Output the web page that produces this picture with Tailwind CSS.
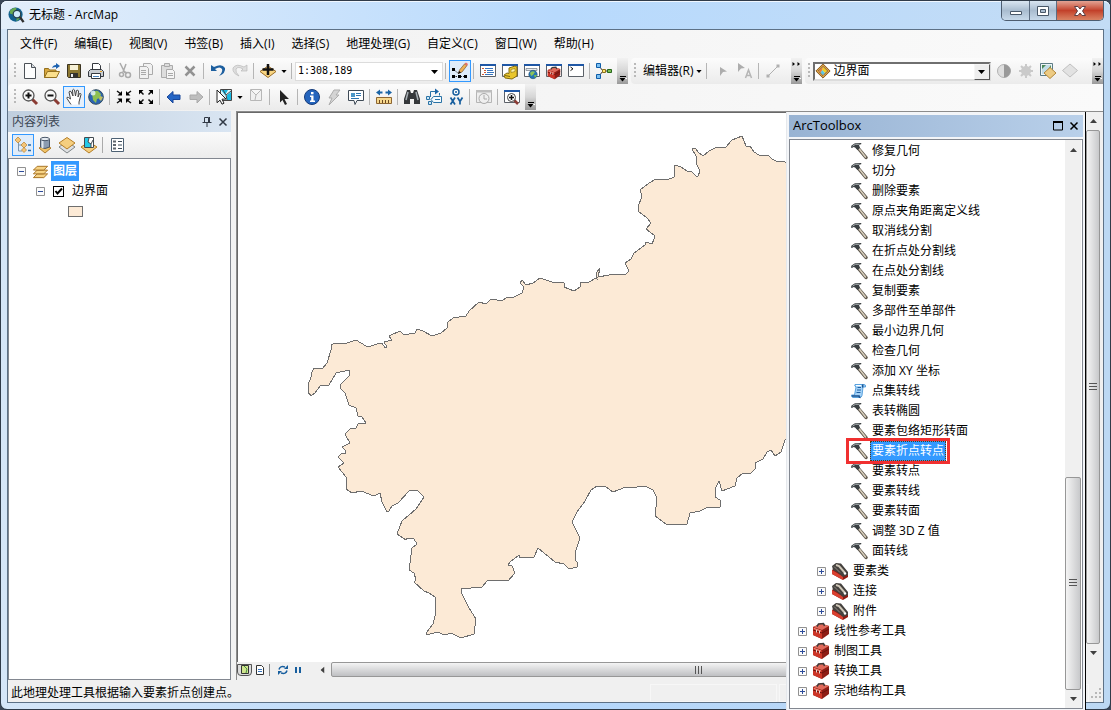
<!DOCTYPE html>
<html lang="zh-CN">
<head>
    <meta charset="UTF-8">
    <meta name="viewport" content="width=device-width, initial-scale=1.0">
    <title>无标题 - ArcMap</title>
    <script src="https://cdn.jsdelivr.net/npm/@tailwindcss/browser@4"></script>
</head>
<body class="h-screen overflow-hidden bg-[#3b4757] font-['Open_Sans','Noto_Sans_CJK_SC',sans-serif] text-xs text-black">

    <!-- Icon definitions -->
    <svg class="hidden" aria-hidden="true">
        <symbol id="hammer" viewBox="0 0 18 18">
            <path d="M8 6l8 9.500" stroke="#5d564c" stroke-width="3.400" stroke-linecap="round"/>
            <path d="M8.500 6l7 9" stroke="#d6cdbb" stroke-width="1.600" stroke-linecap="round"/>
            <path d="M1 5.500L1.500 3.500 5 1.200 11 1l.5 1L9 3l1 3-2.500 2-2.500-2.500-1.500-.5L2 6z" fill="#3a3f42"/>
            <path d="M2.500 4.200L5.500 2.300h4" stroke="#a9afb1" fill="none"/>
        </symbol>
        <symbol id="script" viewBox="0 0 18 18">
            <path d="M5 2.500h9q2 0 1.500 2.500h-2.500l-1 8.500q-.5 2-2.500 2H3q-2-.5-1.500-2.500h3L6 5q-2-1-1-2.500z" fill="#a5d3f8"/>
            <path d="M5 2.500h9q2 0 1.500 2.500h-2.500l-1 8.500q-.5 2-2.500 2H3q-2-.5-1.500-2.500h3L6 5q-2-1-1-2.500z" fill="none" stroke="#3b8fd6" stroke-width=".8"/>
            <path d="M7.500 5.500h3.500M7 8h4M6.500 10.500h4" stroke="#1c5fa3"/>
            <path d="M2 14h7q0 1.500 1.500 1.500M13 5.500q-1-1 0-3" stroke="#174f8c" stroke-width="1.500" fill="none"/>
            <path d="M6 3.500h5" stroke="#fff"/>
        </symbol>
        <symbol id="toolset" viewBox="0 0 18 18">
            <path d="M1 8l3-2 13 7v2l-5 3L1 12z" fill="#8c1a12"/>
            <path d="M1 8l11 6.500V18L1 12z" fill="#d8402f"/>
            <path d="M1 4l4-3 5 .5 7 8.500v3l-5 2-6-5-4-2z" fill="#45413e"/>
            <path d="M5 3l3 1 6 7" stroke="#cfc7b8" stroke-width="2" fill="none"/>
            <path d="M3 4.500l6 6" stroke="#8f8982"/>
            <circle cx="14" cy="11.500" r="1.200" fill="#fff"/>
        </symbol>
        <symbol id="toolbox" viewBox="0 0 18 18">
            <path d="M1 5l8-3.500L17 4v8l-7 5-9-4z" fill="#8e1e16"/>
            <path d="M1 5l8-3.500L17 4l-7 4z" fill="#e06a5b"/>
            <path d="M1 5.500l9 3V17l-9-4z" fill="#cc3527"/>
            <path d="M1 8l9 3 7-4" stroke="#6d120d" fill="none"/>
            <path d="M5 4.500l1.500-2.500 5-.5 1 2.500" stroke="#3e3a39" stroke-width="1.500" fill="none"/>
            <path d="M4.500 8v2.500M7.500 9v2.500" stroke="#e8dcd7"/>
            <path d="M2 6.500l7 2.500" stroke="#ef9b8d"/>
        </symbol>
        <symbol id="plus" viewBox="0 0 9 9">
            <path d="M.5.5h8v8h-8z" fill="#fbfbfb" stroke="#919191"/>
            <path d="M2 4.500h5M4.500 2v5" stroke="#2c4b9a"/>
        </symbol>
        <symbol id="minus" viewBox="0 0 9 9">
            <path d="M.5.5h8v8h-8z" fill="#fbfbfb" stroke="#919191"/>
            <path d="M2 4.500h5" stroke="#2c4b9a"/>
        </symbol>
        <symbol id="down" viewBox="0 0 7 4"><path d="M0 0h7L3.500 4z"/></symbol>
        <symbol id="scroll" viewBox="0 0 7 4"><path d="M0 0h7L3.500 4z" fill="#404040"/></symbol>
        <symbol id="magnify" viewBox="0 0 18 18">
            <path d="M11 11l5 5" stroke="#8b3b33" stroke-width="3"/>
            <circle cx="7.500" cy="7.500" r="5.500" fill="#f8f8f8" stroke="#555" stroke-width="1.300"/>
        </symbol>
        <symbol id="layer-diamond" viewBox="0 0 18 18">
            <path d="M9 1l8 8-8 8-8-8z" fill="#dda044" stroke="#7a4d15"/>
            <path d="M9 4l5 5-5 5-5-5z" fill="#fff2b8" stroke="#5b3d1a"/>
            <path d="M9 4.500L13.500 9 11 11 8 8z" fill="#f4d21f"/><path d="M4.500 9L9 4.500 8 8l-1 3z" fill="#ed7d3c"/><path d="M9 13.500L6.500 11 8 8l3 3z" fill="#5bc6e8"/>
        </symbol>
        <symbol id="overflow" viewBox="0 0 11 26">
            <path d="M3 18.500h6" stroke="#000"/><path d="M4 20.500h6" stroke="#fff"/><path d="M2.500 20h6L5.500 23.500z"/>
        </symbol>
        <symbol id="overflow-more" viewBox="0 0 11 26">
            <path d="M1.500 4l2.500 2-2.500 2zM6.500 4L9 6 6.500 8z"/>
            <path d="M3 18.500h6" stroke="#000"/><path d="M4 20.500h6" stroke="#fff"/><path d="M2.500 20h6L5.500 23.500z"/>
        </symbol>
        <symbol id="grip" viewBox="0 0 4 18">
            <path d="M1 1h2v2H1zM1 5h2v2H1zM1 9h2v2H1zM1 13h2v2H1z" fill="#b9b9b9"/>
        </symbol>
        <symbol id="window" viewBox="0 0 18 18">
            <path d="M1.500 2.500h15v12h-15z" fill="#fff" stroke="#5c6168"/>
            <path d="M1 2h16v2H1z" fill="#1f57a5"/>
        </symbol>
    </svg>

    <div class="flex h-full flex-col rounded-[7px] border border-[#303b49] bg-gradient-to-r from-[#d5e6f8] via-[#b5d7fb] to-[#bcd8f3]">

        <!-- Title bar -->
        <header class="flex h-[28px] shrink-0 items-start justify-between rounded-t-md bg-gradient-to-r from-[#e3eefa] via-[#b8dafd] to-[#c3dcf5] pr-[6px] pl-[7px] shadow-[inset_0_1px_0_#f0f7ff]">
            <h1 class="flex h-[28px] items-center gap-1">
                <svg class="size-[17px]" viewBox="0 0 18 18">
                    <circle cx="8" cy="8" r="7.500" fill="#12618f"/>
                    <path d="M2 4q3-4 7-3l-1 4-3 3-3-1zM9 9l5-1-1 4-4 3z" fill="#68a950"/>
                    <circle cx="9.500" cy="7.500" r="4" fill="#cfeafa" stroke="#27424f" stroke-width="1.300"/>
                    <path d="M12.500 10.500l4 5.500" stroke="#303030" stroke-width="2.500"/>
                </svg>
                <span>无标题 - ArcMap</span>
            </h1>
            <div class="flex h-5 overflow-hidden rounded-b-[5px] border border-t-0 border-[#4d5d70]">
                <button aria-label="最小化" class="grid w-[28px] place-items-center border-r border-[#5c6d82] bg-gradient-to-b from-[#d9e5f1] via-[#a9bccf] to-[#c7d9ea]">
                    <svg class="h-[14px] w-[14px]" viewBox="0 0 14 14"><path d="M1.500 7.500h11v3h-11z" fill="#fff" stroke="#485768"/></svg>
                </button>
                <button aria-label="最大化" class="grid w-[27px] place-items-center border-r border-[#5c6d82] bg-gradient-to-b from-[#d9e5f1] via-[#a9bccf] to-[#c7d9ea]">
                    <svg class="h-[14px] w-[14px]" viewBox="0 0 14 14"><path d="M1.500 2.500h11v9h-11z" fill="#fff" stroke="#485768"/><path d="M4.500 5.500h5v3h-5z" fill="#a9bccf" stroke="#485768"/></svg>
                </button>
                <button aria-label="关闭" class="grid w-[46px] place-items-center bg-gradient-to-b from-[#e2a394] via-[#c2402a] to-[#d98263]">
                    <svg class="h-[14px] w-[14px]" viewBox="0 0 14 14"><path d="M1.500 2.500h3.500l2 2.500 2-2.500h3.500L9.500 7l3 4.500H9L7 9l-2 2.500H1.500l3-4.500z" fill="#fff" stroke="#5d4045"/></svg>
                </button>
            </div>
        </header>

        <main class="mx-[6px] mb-[6px] flex min-h-0 flex-1 flex-col border border-[#5d7186] bg-gradient-to-r from-[#f0f0f0] to-[#fafafa]">

            <!-- Menu bar -->
            <nav class="flex h-[28px] shrink-0 items-center gap-[17px] pl-3 whitespace-nowrap">
                <button>文件(F)</button>
                <button>编辑(E)</button>
                <button>视图(V)</button>
                <button>书签(B)</button>
                <button>插入(I)</button>
                <button>选择(S)</button>
                <button>地理处理(G)</button>
                <button>自定义(C)</button>
                <button>窗口(W)</button>
                <button>帮助(H)</button>
            </nav>

            <!-- Toolbar row 1 -->
            <div class="flex h-[26px] shrink-0 items-center">
                <div class="flex h-[26px] shrink-0 items-center rounded-l bg-gradient-to-b from-[#fcfcfc] to-[#ebebeb] pl-[5px]">
                    <svg class="mr-0.5 h-[18px] w-1"><use href="#grip"/></svg>
                    <button aria-label="新建" class="grid h-[22px] w-[22px] place-items-center">
                        <svg class="size-[18px]" viewBox="0 0 18 18"><path d="M3.500 1.500h7l4 4v11h-11z" fill="#fdfdfd" stroke="#4c5157"/><path d="M10.500 1.500v4h4" fill="#d7dce2" stroke="#4c5157"/></svg>
                    </button>
                    <button aria-label="打开" class="grid h-[22px] w-[22px] place-items-center">
                        <svg class="size-[18px]" viewBox="0 0 18 18"><path d="M1.500 15.500v-9h4l1 1.500h6.500v7.500z" fill="#d9a83e" stroke="#94701f"/><path d="M1.500 15.500l3-6h12l-3 6z" fill="#fbdf8c" stroke="#94701f"/><path d="M9 6q1-3 4-3V1l4 3-4 3V5q-2 0-4 1z" fill="#1d62b0"/></svg>
                    </button>
                    <button aria-label="保存" class="grid h-[22px] w-[22px] place-items-center">
                        <svg class="size-[18px]" viewBox="0 0 18 18"><path d="M2.500 2.500h13v13h-12l-1-1z" fill="#8c7731" stroke="#3a3320"/><path d="M5 3h8v5H5z" fill="#f6f1d7"/><path d="M5 11h8v5H5z" fill="#34322e"/><path d="M6 12h2v3H6z" fill="#eee"/></svg>
                    </button>
                    <button aria-label="打印" class="grid h-[22px] w-[22px] place-items-center">
                        <svg class="size-[18px]" viewBox="0 0 18 18"><path d="M5.500 8V1.500h6l2 2V8" fill="#fff" stroke="#34383e"/><path d="M3.500 7.500h11l2 2v5h-15v-5z" fill="#c9cdd2" stroke="#34383e"/><path d="M4.500 11.500h9v5h-9z" fill="#fff" stroke="#34383e"/><path d="M6 14.500h6" stroke="#4a82bd"/><path d="M13 9.500h2" stroke="#e0a020"/></svg>
                    </button>
                    <i class="mx-[2px] h-4 w-0.5 border-l border-[#b5b5b5]"></i>
                    <button aria-label="剪切" class="grid h-[22px] w-[22px] place-items-center">
                        <svg class="size-[18px]" viewBox="0 0 18 18" fill="none" stroke="#ababab" stroke-width="1.500"><path d="M5 1l5 10M11 2L8 10"/><circle cx="6.500" cy="12.500" r="2"/><circle cx="13" cy="13" r="2.500"/><path d="M8 9l4 2"/></svg>
                    </button>
                    <button aria-label="复制" class="grid h-[22px] w-[22px] place-items-center">
                        <svg class="size-[18px]" viewBox="0 0 18 18" fill="#f1f1f1" stroke="#aaa"><path d="M6.500 1.500h7l2 2v9h-9z"/><path d="M2.500 4.500h7l2 2v10h-9z"/><path d="M4 8.500h5M4 10.500h5M4 12.500h5"/></svg>
                    </button>
                    <button aria-label="粘贴" class="grid h-[22px] w-[22px] place-items-center">
                        <svg class="size-[18px]" viewBox="0 0 18 18" fill="#ddd" stroke="#aaa"><path d="M2.500 3.500h11v12h-11z"/><path d="M5.500 1.500h5v3h-5z"/><path d="M7.500 7.500h6l2 2v7h-8z" fill="#f5f5f5"/><path d="M9 11.500h5M9 13.500h5"/></svg>
                    </button>
                    <button aria-label="删除" class="grid h-[22px] w-[22px] place-items-center">
                        <svg class="size-[18px]" viewBox="0 0 18 18"><path d="M4.500 4.500l9 9M13.500 4.500l-9 9" stroke="#929292" stroke-width="2.500"/></svg>
                    </button>
                    <i class="mx-[2px] h-4 w-0.5 border-l border-[#b5b5b5]"></i>
                    <button aria-label="撤销" class="grid h-[22px] w-[22px] place-items-center">
                        <svg class="size-[18px]" viewBox="0 0 18 18"><path d="M2 3v6h6L6 7q5-3 7 0 1 3-3 7 7-3 6-8-3-5-11-1z" fill="#1d5f9f"/></svg>
                    </button>
                    <button aria-label="恢复" class="grid h-[22px] w-[22px] place-items-center">
                        <svg class="size-[18px]" viewBox="0 0 18 18"><path d="M16 3v6h-6l2-2q-5-3-7 0-1 3 3 7-7-3-6-8 3-5 11-1z" fill="#dedede" stroke="#b9b9b9" stroke-width=".7"/></svg>
                    </button>
                    <i class="mx-[2px] h-4 w-0.5 border-l border-[#b5b5b5]"></i>
                    <button aria-label="添加数据" class="flex h-[22px] w-8 items-center justify-center gap-1">
                        <svg class="size-[18px]" viewBox="0 0 18 18"><path d="M1 9.500L9 4l8 5.500-8 6z" fill="#f8d582" stroke="#9b6d25"/><path d="M9 2v11M3.500 7.500h11" stroke="#111" stroke-width="2.500"/></svg>
                        <svg class="h-[3px] w-[6px]"><use href="#down"/></svg>
                    </button>
                    <i class="mx-[2px] h-4 w-0.5 border-l border-[#b5b5b5]"></i>
                    <div class="relative h-[19px] w-[148px]">
                        <select aria-label="地图比例尺" class="h-full w-full appearance-none border border-[#dcdcdc] bg-white pl-0.5 font-['DejaVu_Sans_Mono',monospace] text-[10px]">
                            <option>1:308,189</option>
                        </select>
                        <svg class="pointer-events-none absolute top-[8px] right-[5px] h-1 w-[7px]"><use href="#down"/></svg>
                    </div>
                    <i class="mx-[2px] h-4 w-0.5 border-l border-[#b5b5b5]"></i>
                    <button aria-label="编辑器工具条" class="grid h-[22px] w-[22px] place-items-center border border-[#3399ff] bg-[#dfecfa]">
                        <svg class="size-[18px]" viewBox="0 0 18 18"><path d="M2.500 7.500l5 4M2 14.500h13" stroke="#333" fill="none" stroke-dasharray="1.500 1"/><path d="M1 6h3v3H1zM1 13h3v3H1zM7 13h3v3H7zM13 13h3v3h-3z"/><path d="M7.500 11.500l1-3.500 5-6 2.500 1.500-5 6.500z" fill="#eeb155" stroke="#7c5a37" stroke-width=".7"/><path d="M13.500 1.500L15 .5l2 1.500-1 2z" fill="#e76f67"/><path d="M7 12l1-3 2 1.500z"/></svg>
                    </button>
                    <i class="mx-[2px] h-4 w-0.5 border-l border-[#b5b5b5]"></i>
                    <button aria-label="内容列表" class="grid h-[22px] w-[22px] place-items-center">
                        <svg class="size-[18px]" viewBox="0 0 18 18"><use href="#window"/><path d="M3 6.500h2M5 8.500h2M5 10.500h2M3 12.500h2" stroke="#d05b35"/><path d="M6 6.500h8M8 8.500h6M8 10.500h7M6 12.500h8" stroke="#3975bd"/></svg>
                    </button>
                    <button aria-label="目录" class="grid h-[22px] w-[22px] place-items-center">
                        <svg class="size-[18px]" viewBox="0 0 18 18"><use href="#window"/><path d="M8 6l6-2 2 1v9l-5 3-7-1-1-3 3-2 2 .500z" fill="#e9c62c" stroke="#856d12"/><path d="M10 7.500l4-1v3l-4 1z" fill="#fff4a8" stroke="#856d12" stroke-width=".6"/><path d="M4 13.500l5 1" stroke="#7c6512"/></svg>
                    </button>
                    <button aria-label="搜索" class="grid h-[22px] w-[22px] place-items-center">
                        <svg class="size-[18px]" viewBox="0 0 18 18"><use href="#window"/><path d="M3 6.500h11v2H3z" fill="#e8ecef" stroke="#7c8791" stroke-width=".8"/><circle cx="10" cy="12.500" r="4.200" fill="#2475b6" stroke="#265072" stroke-width=".6"/><path d="M7 11q2-3 5-1l-2 3-2 1z" fill="#8cc35a"/><path d="M11 13l3 0-2 3z" fill="#7cbf4d"/></svg>
                    </button>
                    <button aria-label="ArcToolbox" class="grid h-[22px] w-[22px] place-items-center">
                        <svg class="size-[18px]" viewBox="0 0 18 18"><use href="#window"/><use href="#toolbox" x="2" y="4" width="14" height="14"/></svg>
                    </button>
                    <button aria-label="Python" class="grid h-[22px] w-[22px] place-items-center">
                        <svg class="size-[18px]" viewBox="0 0 18 18"><use href="#window"/><path d="M3.500 5l2.500 1.800-2.500 1.800" stroke="#111" fill="none"/></svg>
                    </button>
                    <i class="mx-[2px] h-4 w-0.5 border-l border-[#b5b5b5]"></i>
                    <button aria-label="模型构建器" class="grid h-[22px] w-[22px] place-items-center">
                        <svg class="size-[18px]" viewBox="0 0 18 18"><path d="M4 4l4 5-4 5M9 9h5" stroke="#333" fill="none"/><path d="M1.500 1.500h4v4h-4zM1.500 12.500h4v4h-4z" fill="#7cc0f2" stroke="#0f5da8"/><path d="M7.500 7.500h3v3h-3z" fill="#ffe574" stroke="#8b711b"/><path d="M12.500 7.500h4v3h-4z" fill="#7ebf53" stroke="#28671d"/></svg>
                    </button>
                    <button aria-label="工具条选项" class="ml-0.5 h-[26px] w-[11px] bg-gradient-to-b from-[#f2f2f2] via-[#d6d6d6] to-[#9a9a9a]"><svg class="h-[26px] w-[11px]"><use href="#overflow"/></svg></button>
                </div>
                <div class="ml-[3px] flex h-[26px] shrink-0 items-center rounded-l bg-gradient-to-b from-[#fcfcfc] to-[#ebebeb] pl-0.5">
                    <svg class="mr-[6px] h-[18px] w-1"><use href="#grip"/></svg>
                    <button class="flex items-center gap-0.5 whitespace-nowrap">编辑器(R) <svg class="h-[3px] w-[6px]"><use href="#down"/></svg></button>
                    <i class="mx-1 h-4 w-0.5 border-l border-[#b5b5b5]"></i>
                    <button aria-label="编辑工具" class="grid h-[22px] w-[22px] place-items-center">
                        <svg class="size-[18px]" viewBox="0 0 18 18"><path d="M6 5l7 4.500-4 .5-3 4z" fill="#adadad"/></svg>
                    </button>
                    <button aria-label="编辑注记工具" class="grid h-[22px] w-[22px] place-items-center">
                        <svg class="size-[18px]" viewBox="0 0 18 18"><path d="M2 1l7 5-4 .5L2 10z" fill="#adadad"/><path d="M9.500 16l3-8 3 8M10.500 13.500h4" stroke="#b5b5b5" stroke-width="1.500" fill="none"/></svg>
                    </button>
                    <i class="mx-[2px] h-4 w-0.5 border-l border-[#b5b5b5]"></i>
                    <button aria-label="直线段" class="grid h-[22px] w-[22px] place-items-center">
                        <svg class="size-[18px]" viewBox="0 0 18 18"><path d="M4 14L14 4" stroke="#b0b0b0"/><path d="M2.500 12.500h3v3h-3zM12.500 2.500h3v3h-3z" fill="#b0b0b0"/></svg>
                    </button>
                    <button aria-label="编辑器选项" class="ml-[7px] h-[26px] w-[11px] bg-gradient-to-b from-[#f2f2f2] via-[#d6d6d6] to-[#9a9a9a]"><svg class="h-[26px] w-[11px]"><use href="#overflow-more"/></svg></button>
                </div>
                <div class="ml-[3px] flex h-[26px] flex-1 items-center rounded-l bg-gradient-to-b from-[#fcfcfc] to-[#ebebeb] pl-0.5">
                    <svg class="mr-0.5 h-[18px] w-1 shrink-0"><use href="#grip"/></svg>
                    <div class="relative h-[19px] w-[178px]">
                        <select aria-label="图层" class="h-full w-full appearance-none border-2 border-[#dcdcdc] border-t-[#6f6f6f] border-l-[#6f6f6f] bg-white pl-[19px] text-xs leading-[14px]">
                            <option>边界面</option>
                        </select>
                        <svg class="pointer-events-none absolute top-px left-0.5 size-4"><use href="#layer-diamond"/></svg>
                        <span class="pointer-events-none absolute top-0.5 right-px grid h-[16px] w-[16px] place-items-center border border-[#f5f5f5] border-r-[#555] border-b-[#555] bg-[#eeeeee]"><svg class="h-1 w-[7px]"><use href="#down"/></svg></span>
                    </div>
                    <button aria-label="对比度" class="ml-0.5 grid h-[22px] w-[22px] place-items-center">
                        <svg class="size-[18px]" viewBox="0 0 18 18"><circle cx="9" cy="9" r="6.500" fill="#dedede" stroke="#b2b2b2"/><path d="M9 2.500a6.500 6.500 0 0 1 0 13z" fill="#999"/></svg>
                    </button>
                    <button aria-label="亮度" class="grid h-[22px] w-[22px] place-items-center">
                        <svg class="size-[18px]" viewBox="0 0 18 18"><path d="M9 2v14M2 9h14M4 4l10 10M14 4L4 14" stroke="#c9c9c9" stroke-width="2"/><circle cx="9" cy="9" r="5" fill="#cacaca"/></svg>
                    </button>
                    <button aria-label="透明度" class="grid h-[22px] w-[22px] place-items-center">
                        <svg class="size-[18px]" viewBox="0 0 18 18"><path d="M1.500 1.500h12v12h-12z" fill="#eef4f6" stroke="#5b7b85"/><path d="M3 3h9v9H3z" fill="#4c8a5a"/><path d="M3 7l4-4h5L6 12H3z" fill="#c2dce6"/><path d="M5 11l6-5.500 6 5.500-6 5.500z" fill="#edcb83" stroke="#b3883c"/></svg>
                    </button>
                    <button aria-label="卷帘" class="grid h-[22px] w-[22px] place-items-center">
                        <svg class="size-[18px]" viewBox="0 0 18 18"><path d="M1.500 8.500L9 2l7.500 6.500L9 15z" fill="#e2e2e2" stroke="#c0c0c0"/></svg>
                    </button>
                    <button aria-label="效果选项" class="ml-auto h-[26px] w-[11px] bg-gradient-to-b from-[#f2f2f2] via-[#d6d6d6] to-[#9a9a9a]"><svg class="h-[26px] w-[11px]"><use href="#overflow-more"/></svg></button>
                </div>
            </div>

            <!-- Toolbar row 2 -->
            <div class="mb-px flex h-[26px] shrink-0 items-center">
                <div class="flex h-[26px] items-center rounded-l bg-gradient-to-b from-[#fcfcfc] to-[#ebebeb] pl-[5px]">
                    <svg class="mr-0.5 h-[18px] w-1"><use href="#grip"/></svg>
                    <button aria-label="放大" class="grid h-[22px] w-[22px] place-items-center">
                        <svg class="size-[18px]" viewBox="0 0 18 18"><use href="#magnify"/><path d="M4.500 7.500h6M7.500 4.500v6" stroke="#111" stroke-width="2"/></svg>
                    </button>
                    <button aria-label="缩小" class="grid h-[22px] w-[22px] place-items-center">
                        <svg class="size-[18px]" viewBox="0 0 18 18"><use href="#magnify"/><path d="M4.500 7.500h6" stroke="#111" stroke-width="2"/></svg>
                    </button>
                    <button aria-label="平移" class="grid h-[22px] w-[22px] place-items-center border border-[#3399ff] bg-[#e6f0fb]">
                        <svg class="size-[18px]" viewBox="0 0 18 18"><path d="M6 16.500L2 10.500q-.5-2 1.500-1L5.500 11 4 4q.5-1.500 2-.5L8 8 7.500 2q1-1.500 2 0l1 6 1-5.500q1.500-1 2 .5L13 9l1.500-3.500q1.500-.5 1.500 1L14 14v2.500" fill="#fff" stroke="#444"/></svg>
                    </button>
                    <button aria-label="全图" class="grid h-[22px] w-[22px] place-items-center">
                        <svg class="size-[18px]" viewBox="0 0 18 18"><circle cx="9" cy="9" r="7.300" fill="#2b63b4" stroke="#344f60"/><path d="M5 5q3-3 6-2l3 3-1 4-3 1-1 4-3-3z" fill="#8dbf52"/><path d="M13 8l3 1-2 4-2-2z" fill="#c2bf62"/><circle cx="6" cy="5" r="2.500" fill="#e3f2f6" fill-opacity=".85"/></svg>
                    </button>
                    <i class="mx-[2px] h-4 w-0.5 border-l border-[#b5b5b5]"></i>
                    <button aria-label="固定比例放大" class="grid h-[22px] w-[22px] place-items-center">
                        <svg class="size-[18px]" viewBox="0 0 18 18"><path d="M2 3l4 3M16 3l-4 3M2 15l4-3M16 15l-4-3" stroke="#111" stroke-width="1.500"/><path d="M7 3v4.500H2.500zM11 3v4.500h4.500zM7 15v-4.500H2.500zM11 15v-4.500h4.500z"/></svg>
                    </button>
                    <button aria-label="固定比例缩小" class="grid h-[22px] w-[22px] place-items-center">
                        <svg class="size-[18px]" viewBox="0 0 18 18"><path d="M3 3l3.500 3.500M15 3l-3.500 3.500M3 15l3.500-3.500M15 15l-3.500-3.500" stroke="#111" stroke-width="1.500"/><path d="M2 2h4.500L2 6.500zM16 2h-4.500L16 6.500zM2 16h4.500L2 11.500zM16 16h-4.500l4.500-4.500z"/></svg>
                    </button>
                    <i class="mx-[2px] h-4 w-0.5 border-l border-[#b5b5b5]"></i>
                    <button aria-label="返回上一视图" class="grid h-[22px] w-[22px] place-items-center">
                        <svg class="size-[18px]" viewBox="0 0 18 18"><path d="M2 9l6-5.500V7h7v4.500H8v3.500z" fill="#2465c5" stroke="#19479a"/></svg>
                    </button>
                    <button aria-label="转到下一视图" class="grid h-[22px] w-[22px] place-items-center">
                        <svg class="size-[18px]" viewBox="0 0 18 18"><path d="M16 9l-6-5.500V7H3v4.500h7v3.500z" fill="#bebebe" stroke="#aaa"/></svg>
                    </button>
                    <i class="mx-[2px] h-4 w-0.5 border-l border-[#b5b5b5]"></i>
                    <button aria-label="选择要素" class="flex h-[22px] w-8 items-center justify-center gap-1">
                        <svg class="size-[18px]" viewBox="0 0 18 18"><path d="M5.500 1.500h11v11h-11z" fill="#dff6fb" stroke="#454545"/><path d="M6 2h7l-3 5zM12 7l4-3v8h-4z" fill="#18b9e2"/><path d="M8 2l3 5 5-4M11 7l1 5" stroke="#454545" fill="none"/><path d="M2 2l9 9-4 .2 2 4-2 1-2-4-3 2.500z" fill="#fff" stroke="#222"/></svg>
                        <svg class="h-[3px] w-[6px]"><use href="#down"/></svg>
                    </button>
                    <button aria-label="清除所选要素" class="grid h-[22px] w-[22px] place-items-center pb-1">
                        <svg class="size-[14px]" viewBox="0 0 14 14"><path d="M1.500 1.500h11v11h-11zM2 2l5 5 5-5M7 7l-1 5" stroke="#b7b7b7" fill="#f1f1f1"/></svg>
                    </button>
                    <i class="mx-[2px] h-4 w-0.5 border-l border-[#b5b5b5]"></i>
                    <button aria-label="选择元素" class="grid h-[22px] w-[22px] place-items-center">
                        <svg class="size-[18px]" viewBox="0 0 18 18"><path d="M5 2l9 9H9.500l2.500 5-2 1-2.500-5L5 14.500z" fill="#222"/></svg>
                    </button>
                    <i class="mx-[2px] h-4 w-0.5 border-l border-[#b5b5b5]"></i>
                    <button aria-label="识别" class="grid h-[22px] w-[22px] place-items-center">
                        <svg class="size-[18px]" viewBox="0 0 18 18"><circle cx="9" cy="9" r="7.500" fill="#2464bd" stroke="#163c7b"/><path d="M8 4h2.500v2.200H8zM7 7.500h3.500v5H12V14H7v-1.500h1.200V9H7z" fill="#fff"/></svg>
                    </button>
                    <button aria-label="超链接" class="grid h-[22px] w-[22px] place-items-center">
                        <svg class="size-[18px]" viewBox="0 0 18 18"><path d="M9 2h6l-4 5h3L4 17l3-7H4z" fill="#d4d4d4" stroke="#adadad"/></svg>
                    </button>
                    <button aria-label="HTML 弹出窗口" class="grid h-[22px] w-[22px] place-items-center">
                        <svg class="size-[18px]" viewBox="0 0 18 18"><path d="M1.500 2.500h15v10H10l-2 4-1-4H1.500z" fill="#fff" stroke="#3f4b57"/><path d="M4 5h4v4H4z" fill="#4b97c8"/><path d="M9 5.500h5M9 7.500h5M4 10.500h8" stroke="#2d75b1"/></svg>
                    </button>
                    <i class="mx-[2px] h-4 w-0.5 border-l border-[#b5b5b5]"></i>
                    <button aria-label="测量" class="grid h-[22px] w-[22px] place-items-center">
                        <svg class="size-[18px]" viewBox="0 0 18 18"><path d="M1 4.500L5 1.500v2h2.500v2H5v2zM17 4.500l-4-3v2h-2.500v2H13v2z" fill="#1b65a6"/><path d="M1.500 9.500h15v6h-15z" fill="#f7d88d" stroke="#8d6633"/><path d="M4.500 12v3M7.500 12v3M10.500 12v3M13.500 12v3" stroke="#6b4a22"/></svg>
                    </button>
                    <i class="mx-[2px] h-4 w-0.5 border-l border-[#b5b5b5]"></i>
                    <button aria-label="查找" class="grid h-[22px] w-[22px] place-items-center">
                        <svg class="size-[18px]" viewBox="0 0 18 18"><path d="M4 2h3l1 3h2l1-3h3l3 9v5h-6v-5H7v5H1v-5z" fill="#35383b"/><path d="M5 4L3 12M13 4l2 8" stroke="#a5adb2" stroke-width="1.500"/></svg>
                    </button>
                    <button aria-label="查找路径" class="grid h-[22px] w-[22px] place-items-center">
                        <svg class="size-[18px]" viewBox="0 0 18 18"><path d="M5.500 9V3.500H11" fill="none" stroke="#2a73a6"/><path d="M10 .5l4 3-4 3z" fill="#1b65a6"/><path d="M14.500 5v2.500" stroke="#2a73a6"/><path d="M8.500 8.500h8v6h-8L6 11.500z" fill="#f4fafd" stroke="#2a73a6"/><path d="M10 11.500h5" stroke="#2a73a6"/><path d="M1.500 8.500h3v3h-3zM3.500 13.500h3v3h-3z" fill="#cfe8f6" stroke="#2a73a6"/></svg>
                    </button>
                    <button aria-label="转到 XY" class="grid h-[22px] w-[22px] place-items-center">
                        <svg class="size-[18px]" viewBox="0 0 18 18"><circle cx="9" cy="4" r="3" fill="#fff" stroke="#175e9e" stroke-width="1.500"/><circle cx="9" cy="4" r="1" fill="#175e9e"/><path d="M3.500 9.500l4.500 7M8 9.500l-4.500 7M10.500 9.500l2.500 4 2.500-4M13 13v3.500" stroke="#175e9e" stroke-width="1.700" fill="none"/></svg>
                    </button>
                    <i class="mx-[2px] h-4 w-0.5 border-l border-[#b5b5b5]"></i>
                    <button aria-label="时间滑块" class="grid h-[22px] w-[22px] place-items-center">
                        <svg class="size-[18px]" viewBox="0 0 18 18"><path d="M1.500 2.500h15v12h-15z" fill="#eee" stroke="#b5b5b5"/><path d="M1 2h16v2.500H1z" fill="#bdbdbd"/><circle cx="9" cy="10.500" r="5" fill="#efefef" stroke="#aaa"/><path d="M9 7v4h3" stroke="#aaa" fill="none"/></svg>
                    </button>
                    <i class="mx-[2px] h-4 w-0.5 border-l border-[#b5b5b5]"></i>
                    <button aria-label="查看器窗口" class="grid h-[22px] w-[22px] place-items-center">
                        <svg class="size-[18px]" viewBox="0 0 18 18"><use href="#window"/><path d="M11 12l4 4" stroke="#8b3b33" stroke-width="2.500"/><circle cx="8.500" cy="9.500" r="4" fill="#fff" stroke="#444"/><path d="M6 9.500h5M8.500 7v5" stroke="#111" stroke-width="1.500"/></svg>
                    </button>
                    <button aria-label="工具选项" class="ml-0.5 h-[26px] w-[11px] bg-gradient-to-b from-[#f2f2f2] via-[#d6d6d6] to-[#9a9a9a]"><svg class="h-[26px] w-[11px]"><use href="#overflow"/></svg></button>
                </div>
            </div>

            <div class="flex min-h-0 flex-1">
                <!-- Table of contents -->
                <aside class="flex w-[223px] shrink-0 flex-col">
                    <div class="flex h-[21px] shrink-0 items-center bg-gradient-to-r from-[#c0cfdf] to-[#d9e5f2] pl-1 text-[#3c4654]">
                        <h2 class="flex-1">内容列表</h2>
                        <button aria-label="自动隐藏"><svg class="size-4" viewBox="0 0 16 16"><path d="M5.500 8V3.500h4V8M3.500 8.500h9M8 9v4M10.500 3v5" stroke="#303844" fill="none"/></svg></button>
                        <button aria-label="关闭内容列表"><svg class="size-4" viewBox="0 0 16 16"><path d="M4.500 4.500l7 7M11.500 4.500l-7 7" stroke="#303844" stroke-width="1.500"/></svg></button>
                    </div>
                    <div class="flex h-[26px] shrink-0 items-center bg-gradient-to-b from-[#fafafa] to-[#ececec] pl-1">
                        <button aria-label="按绘制顺序列出" class="grid h-[22px] w-[22px] place-items-center border border-[#3399ff] bg-[#dfecfa]">
                            <svg class="size-[18px]" viewBox="0 0 18 18"><path d="M4.500 5v10H8M5 9h3" stroke="#7e96ad" fill="none"/><path d="M4 1l3 3-3 3-3-3zM10 6l3 3-3 3-3-3zM10 11.500l2.500 2.500-2.500 2.500L7.500 14z" fill="#f4c579" stroke="#b7812d" stroke-width=".7"/><path d="M14 9h3M14 14.500h3" stroke="#2a6cab" stroke-width="1.500"/></svg>
                        </button>
                        <button aria-label="按源列出" class="grid h-[22px] w-[22px] place-items-center">
                            <svg class="size-[18px]" viewBox="0 0 18 18"><path d="M3 12l6-3 6 3-6 5z" fill="#f0c266" stroke="#b07c2a"/><path d="M4.500 3v8q4.500 3 9 0V3z" fill="#8b9bb0" stroke="#4b586a"/><path d="M6.500 4v8" stroke="#dfe6ee" stroke-width="2"/><ellipse cx="9" cy="3" rx="4.500" ry="1.700" fill="#e4eaf1" stroke="#4b586a"/></svg>
                        </button>
                        <button aria-label="按可见性列出" class="grid h-[22px] w-[22px] place-items-center">
                            <svg class="size-[18px]" viewBox="0 0 18 18"><path d="M1 11l8-5.500 8 5.500-8 6z" fill="#dfe1e3" stroke="#7f8588"/><path d="M1 7l8-5.500L17 7l-8 6z" fill="#f5ce7f" stroke="#b57e26"/></svg>
                        </button>
                        <button aria-label="按选择列出" class="grid h-[22px] w-[22px] place-items-center">
                            <svg class="size-[18px]" viewBox="0 0 18 18"><path d="M1 11l8-5 8 5-8 6z" fill="#f5ce7f" stroke="#b57e26"/><path d="M4.500 1.500h9v10h-9z" fill="#fff" stroke="#424a50"/><path d="M5 2h4l-1 4 3 2v3H5z" fill="#25c9e8"/><path d="M9 2L8 6l3 2 2-4M11 8v3" stroke="#424a50" fill="none"/></svg>
                        </button>
                        <i class="mx-[2px] h-4 w-0.5 border-l border-[#aaa]"></i>
                        <button aria-label="选项" class="grid h-[22px] w-[22px] place-items-center">
                            <svg class="size-[16px]" viewBox="0 0 16 16"><path d="M2.500 1.500h12v13h-12z" fill="#fff" stroke="#4d6174"/><path d="M4 3.500h3v2H4zM4 7h3v2H4zM4 10.500h3v2H4z" fill="#60676e"/><path d="M9 4.500h4M9 8h4M9 11.500h4" stroke="#3d4c5a"/></svg>
                        </button>
                    </div>
                    <ul class="min-h-0 flex-1 border border-[#828790] bg-white pt-0.5">
                        <li>
                            <div class="flex h-5 items-center pl-2">
                                <svg class="mr-[6px] size-[9px]"><use href="#minus"/></svg>
                                <svg class="mr-0.5 size-[17px]" viewBox="0 0 18 18"><g fill="#f7d384" stroke="#a46f20"><path d="M1.500 15.500l4-4h11l-4 4z"/><path d="M1.500 11.500l4-4h11l-4 4z"/><path d="M1.500 7.500l4-4h11l-4 4z"/></g></svg>
                                <span class="h-5 bg-[#3399ff] px-0.5 leading-5 font-bold text-white">图层</span>
                            </div>
                            <ul>
                                <li>
                                    <label class="flex h-5 items-center pl-[27px]">
                                        <svg class="mr-2 size-[9px]"><use href="#minus"/></svg>
                                        <span class="mr-2 grid size-[11px] place-items-center">
                                            <input type="checkbox" checked class="col-start-1 row-start-1 size-[11px] appearance-none border border-black bg-white">
                                            <svg class="pointer-events-none col-start-1 row-start-1 size-[9px]" viewBox="0 0 9 9"><path d="M1.500 4l2 2.500L8 1.500" stroke="#000" stroke-width="2" fill="none"/></svg>
                                        </span>
                                        <span>边界面</span>
                                    </label>
                                    <div class="mt-[5px] ml-[59px] h-[11px] w-[15px] border border-[#6e6e6e] bg-[#fcead6]"></div>
                                </li>
                            </ul>
                        </li>
                    </ul>
                </aside>

                <!-- Map view -->
                <section class="ml-[5px] flex min-w-0 flex-1 flex-col border-t border-l border-[#8c8c8c]">
                    <div class="flex min-h-0 flex-1">
                        <div class="min-w-0 flex-1 overflow-hidden border-t border-l border-[#696969] bg-white">
                            <svg class="h-[549px] w-[849px]" viewBox="239 113 849 549" shape-rendering="crispEdges" role="img" aria-label="边界面">
                                <path fill="#fcead6" stroke="#6e6e6e" d="M1000 162L786 162 777 161 773 159 769 155 760 155 755 152 751 146 747 146 743 136 733 140 727 147 716 148 710 151 704 156 700 153 696 148 693 149 697 156 698 165 701 171 699 176 697 176 693 172 688 171 682 167 676 165 675 177 668 180 657 179 650 183 641 190 643 196 639 207 639 211 648 218 652 223 647 229 655 235 655 239 653 244 647 242 646 245 635 253 632 259 626 263 630 271 627 274 610 275 599 277 601 268 597 273 598 279 597 278 590 282 582 282 581 287 575 291 565 287 565 283 553 282 541 278 534 283 527 285 523 280 521 283 525 287 523 293 515 297 507 298 503 301 492 299 487 304 480 302 470 311 467 316 454 318 449 322 448 328 442 333 433 336 424 331 418 329 416 333 405 335 401 331 390 336 393 340 385 342 388 347 386 348 383 343 381 343 372 346 367 346 357 340 348 343 336 343 332 345 332 350 328 363 323 369 315 368 313 372 312 377 309 385 309 392 312 396 316 393 322 385 330 385 337 373 350 370 351 375 341 385 342 389 346 393 350 405 357 408 359 416 363 417 367 423 359 424 357 428 352 428 346 434 351 443 343 447 347 451 346 454 343 453 339 457 345 463 339 467 347 477 347 489 353 493 362 491 375 496 381 493 383 502 388 512 390 511 393 506 399 503 410 491 418 490 425 497 417 509 403 521 398 534 407 540 408 538 415 539 418 544 413 548 410 570 415 573 417 580 415 582 425 591 430 593 436 597 436 610 437 612 434 624 427 633 428 635 438 632 446 635 452 633 462 638 475 634 477 619 470 608 462 592 462 589 483 587 489 580 509 581 516 573 513 566 509 565 511 562 520 555 521 558 535 557 539 548 556 562 565 564 570 569 578 567 579 563 576 560 577 550 581 538 573 522 578 512 586 501 592 490 598 486 607 487 614 492 627 487 638 487 646 486 654 490 658 498 656 516 667 524 688 524 691 513 701 511 707 508 721 507 721 500 716 497 717 487 720 481 723 491 736 486 738 478 744 473 752 473 757 468 756 463 764 459 768 452 772 450 776 456 782 452 786 440 1000 420z"/>
                            </svg>
                        </div>
                        <div class="flex w-[18px] shrink-0 flex-col bg-[#f0f0f0] pr-[3px] pl-px">
                            <button aria-label="向上滚动" class="grid h-[18px] place-items-center"><svg class="h-1 w-[7px] rotate-180"><use href="#scroll"/></svg></button>
                            <div class="grid flex-1 place-items-center rounded-xs border border-[#979797] bg-gradient-to-r from-[#f4f4f4] to-[#c8c9cb]">
                                <svg class="h-2 w-2" viewBox="0 0 8 8"><path d="M0 .5h8M0 3.500h8M0 6.500h8" stroke="#555"/></svg>
                            </div>
                            <button aria-label="向下滚动" class="grid h-[18px] place-items-center"><svg class="h-1 w-[7px]"><use href="#scroll"/></svg></button>
                        </div>
                    </div>
                    <div class="flex h-[18px] shrink-0 items-center bg-[#f0f0f0] pb-[3px]">
                        <button aria-label="数据视图" class="grid h-[12px] w-[15px] place-items-center rounded-b border border-[#555] bg-[#ddd]">
                            <svg class="size-[10px]" viewBox="0 0 10 10"><path d="M1.500.5h7v8h-7z" fill="#cfe58e" stroke="#333"/><path d="M4 1l3 3-1 4" stroke="#4a8f45" fill="none"/></svg>
                        </button>
                        <button aria-label="布局视图" class="grid w-[15px] place-items-center">
                            <svg class="size-[10px]" viewBox="0 0 10 10"><path d="M1.500.5h5l2 2v7h-7z" fill="#fff" stroke="#333"/><path d="M3 4.500h4M3 6.500h4" stroke="#3975bd"/></svg>
                        </button>
                        <i class="ml-0.5 h-3 w-1 border-l border-[#888]"></i>
                        <button aria-label="刷新视图" class="ml-0.5 grid w-[15px] place-items-center">
                            <svg class="size-[10px]" viewBox="0 0 10 10"><path d="M1 4.500q1-4 6-2.500M9 5.500q-1 4-6 2.500" stroke="#175e9e" stroke-width="1.500" fill="none"/><path d="M6 4h4V0zM4 6H0v4z" fill="#175e9e"/></svg>
                        </button>
                        <button aria-label="暂停绘制" class="grid w-[15px] place-items-center">
                            <svg class="size-[8px]" viewBox="0 0 8 8"><path d="M2 1v6M6 1v6" stroke="#175e9e" stroke-width="2"/></svg>
                        </button>
                        <button aria-label="向左滚动" class="ml-[9px] grid h-[15px] w-[17px] place-items-center"><svg class="h-1 w-[7px] rotate-90"><use href="#scroll"/></svg></button>
                        <div class="grid h-[15px] flex-1 place-items-center rounded-xs border border-[#979797] bg-gradient-to-b from-[#f4f4f4] to-[#bfc0c3]">
                            <svg class="size-2" viewBox="0 0 8 8"><path d="M.5 0v8M3.500 0v8M6.500 0v8" stroke="#555"/></svg>
                        </div>
                        <button aria-label="向右滚动" class="mr-[19px] grid h-[15px] w-[18px] place-items-center"><svg class="h-1 w-[7px] -rotate-90"><use href="#scroll"/></svg></button>
                    </div>
                </section>
            </div>

            <!-- Status bar -->
            <footer class="flex h-[22px] shrink-0 items-center bg-[#f0f0f0] pt-[3px] pl-[3px]">
                <p class="flex-1">此地理处理工具根据输入要素折点创建点。</p>
                <div class="mr-0.5 h-[18px] w-[127px] border border-[#f7f7f7]"></div>
                <div class="h-[18px] w-[310px] border border-[#f7f7f7]"></div>
                <svg class="size-3.5" viewBox="0 0 14 14"><path d="M10 2h2v2h-2zM6 6h2v2H6zM10 6h2v2h-2zM2 10h2v2H2zM6 10h2v2H6zM10 10h2v2h-2z" fill="#b8b8b8"/></svg>
            </footer>
        </main>
    </div>

    <!-- Floating ArcToolbox window -->
    <section class="absolute top-[112px] right-[25px] bottom-0 flex w-[300px] flex-col border-r border-l border-r-black border-l-[#e5e8ec] bg-[#f3f5f8] px-0.5 pt-[3px] pb-px">
        <div class="mb-0.5 flex h-[22px] shrink-0 items-center bg-gradient-to-r from-[#98b3d3] to-[#b9d0ea] pr-px pl-1">
            <h2 class="flex-1 text-[13px]">ArcToolbox</h2>
            <button aria-label="最大化 ArcToolbox"><svg class="size-4" viewBox="0 0 16 16"><path d="M3.500 4v8h9V4z" fill="none" stroke="#000"/><path d="M3 4h10" stroke="#000" stroke-width="2"/></svg></button>
            <button aria-label="关闭 ArcToolbox"><svg class="size-4" viewBox="0 0 16 16"><path d="M4.500 4.500l7 7M11.500 4.500l-7 7" stroke="#000" stroke-width="1.500"/></svg></button>
        </div>
        <div class="flex min-h-0 flex-1 border border-[#828790] bg-white">
            <ul class="min-w-0 flex-1 overflow-hidden pt-px">
                <li class="flex h-5 items-center gap-0.5 pl-[60px]"><svg class="size-[18px]"><use href="#hammer"/></svg><span class="px-0.5">修复几何</span></li>
                <li class="flex h-5 items-center gap-0.5 pl-[60px]"><svg class="size-[18px]"><use href="#hammer"/></svg><span class="px-0.5">切分</span></li>
                <li class="flex h-5 items-center gap-0.5 pl-[60px]"><svg class="size-[18px]"><use href="#hammer"/></svg><span class="px-0.5">删除要素</span></li>
                <li class="flex h-5 items-center gap-0.5 pl-[60px]"><svg class="size-[18px]"><use href="#hammer"/></svg><span class="px-0.5">原点夹角距离定义线</span></li>
                <li class="flex h-5 items-center gap-0.5 pl-[60px]"><svg class="size-[18px]"><use href="#hammer"/></svg><span class="px-0.5">取消线分割</span></li>
                <li class="flex h-5 items-center gap-0.5 pl-[60px]"><svg class="size-[18px]"><use href="#hammer"/></svg><span class="px-0.5">在折点处分割线</span></li>
                <li class="flex h-5 items-center gap-0.5 pl-[60px]"><svg class="size-[18px]"><use href="#hammer"/></svg><span class="px-0.5">在点处分割线</span></li>
                <li class="flex h-5 items-center gap-0.5 pl-[60px]"><svg class="size-[18px]"><use href="#hammer"/></svg><span class="px-0.5">复制要素</span></li>
                <li class="flex h-5 items-center gap-0.5 pl-[60px]"><svg class="size-[18px]"><use href="#hammer"/></svg><span class="px-0.5">多部件至单部件</span></li>
                <li class="flex h-5 items-center gap-0.5 pl-[60px]"><svg class="size-[18px]"><use href="#hammer"/></svg><span class="px-0.5">最小边界几何</span></li>
                <li class="flex h-5 items-center gap-0.5 pl-[60px]"><svg class="size-[18px]"><use href="#hammer"/></svg><span class="px-0.5">检查几何</span></li>
                <li class="flex h-5 items-center gap-0.5 pl-[60px]"><svg class="size-[18px]"><use href="#hammer"/></svg><span class="px-0.5">添加 XY 坐标</span></li>
                <li class="flex h-5 items-center gap-0.5 pl-[60px]"><svg class="size-[18px]"><use href="#script"/></svg><span class="px-0.5">点集转线</span></li>
                <li class="flex h-5 items-center gap-0.5 pl-[60px]"><svg class="size-[18px]"><use href="#hammer"/></svg><span class="px-0.5">表转椭圆</span></li>
                <li class="flex h-5 items-center gap-0.5 pl-[60px]"><svg class="size-[18px]"><use href="#hammer"/></svg><span class="px-0.5">要素包络矩形转面</span></li>
                <li class="flex h-5 items-center pl-[60px]">
                    <div class="relative flex h-5 items-center gap-0.5">
                        <svg class="size-[18px]"><use href="#hammer"/></svg>
                        <span class="h-5 bg-[#3399ff] px-0.5 leading-5 text-white outline-1 -outline-offset-1 outline-dotted outline-[#5a3a10]">要素折点转点</span>
                        <div class="absolute -inset-x-1 -inset-y-[3px] border-3 border-[#f03030]"></div>
                    </div>
                </li>
                <li class="flex h-5 items-center gap-0.5 pl-[60px]"><svg class="size-[18px]"><use href="#hammer"/></svg><span class="px-0.5">要素转点</span></li>
                <li class="flex h-5 items-center gap-0.5 pl-[60px]"><svg class="size-[18px]"><use href="#hammer"/></svg><span class="px-0.5">要素转线</span></li>
                <li class="flex h-5 items-center gap-0.5 pl-[60px]"><svg class="size-[18px]"><use href="#hammer"/></svg><span class="px-0.5">要素转面</span></li>
                <li class="flex h-5 items-center gap-0.5 pl-[60px]"><svg class="size-[18px]"><use href="#hammer"/></svg><span class="px-0.5">调整 3D Z 值</span></li>
                <li class="flex h-5 items-center gap-0.5 pl-[60px]"><svg class="size-[18px]"><use href="#hammer"/></svg><span class="px-0.5">面转线</span></li>
                <li class="flex h-5 items-center gap-0.5 pl-[27px]"><svg class="mr-[3px] size-[9px]"><use href="#plus"/></svg><svg class="size-[18px]"><use href="#toolset"/></svg><span class="px-0.5">要素类</span></li>
                <li class="flex h-5 items-center gap-0.5 pl-[27px]"><svg class="mr-[3px] size-[9px]"><use href="#plus"/></svg><svg class="size-[18px]"><use href="#toolset"/></svg><span class="px-0.5">连接</span></li>
                <li class="flex h-5 items-center gap-0.5 pl-[27px]"><svg class="mr-[3px] size-[9px]"><use href="#plus"/></svg><svg class="size-[18px]"><use href="#toolset"/></svg><span class="px-0.5">附件</span></li>
                <li class="flex h-5 items-center gap-0.5 pl-2"><svg class="mr-[3px] size-[9px]"><use href="#plus"/></svg><svg class="size-[18px]"><use href="#toolbox"/></svg><span class="px-0.5">线性参考工具</span></li>
                <li class="flex h-5 items-center gap-0.5 pl-2"><svg class="mr-[3px] size-[9px]"><use href="#plus"/></svg><svg class="size-[18px]"><use href="#toolbox"/></svg><span class="px-0.5">制图工具</span></li>
                <li class="flex h-5 items-center gap-0.5 pl-2"><svg class="mr-[3px] size-[9px]"><use href="#plus"/></svg><svg class="size-[18px]"><use href="#toolbox"/></svg><span class="px-0.5">转换工具</span></li>
                <li class="flex h-5 items-center gap-0.5 pl-2"><svg class="mr-[3px] size-[9px]"><use href="#plus"/></svg><svg class="size-[18px]"><use href="#toolbox"/></svg><span class="px-0.5">宗地结构工具</span></li>
            </ul>
            <div class="mr-px flex w-4 shrink-0 flex-col bg-[#f0f0f0]">
                <button aria-label="列表向上滚动" class="grid h-5 place-items-center"><svg class="h-1 w-[7px] rotate-180"><use href="#scroll"/></svg></button>
                <div class="flex-[3]"></div>
                <div class="grid flex-[2] place-items-center rounded-xs border border-[#979797] bg-gradient-to-r from-[#f4f4f4] to-[#c8c9cb]">
                    <svg class="size-2" viewBox="0 0 8 8"><path d="M0 .5h8M0 3.500h8M0 6.500h8" stroke="#555"/></svg>
                </div>
                <button aria-label="列表向下滚动" class="grid h-[18px] place-items-center"><svg class="h-1 w-[7px]"><use href="#scroll"/></svg></button>
            </div>
        </div>
    </section>
</body>
</html>
